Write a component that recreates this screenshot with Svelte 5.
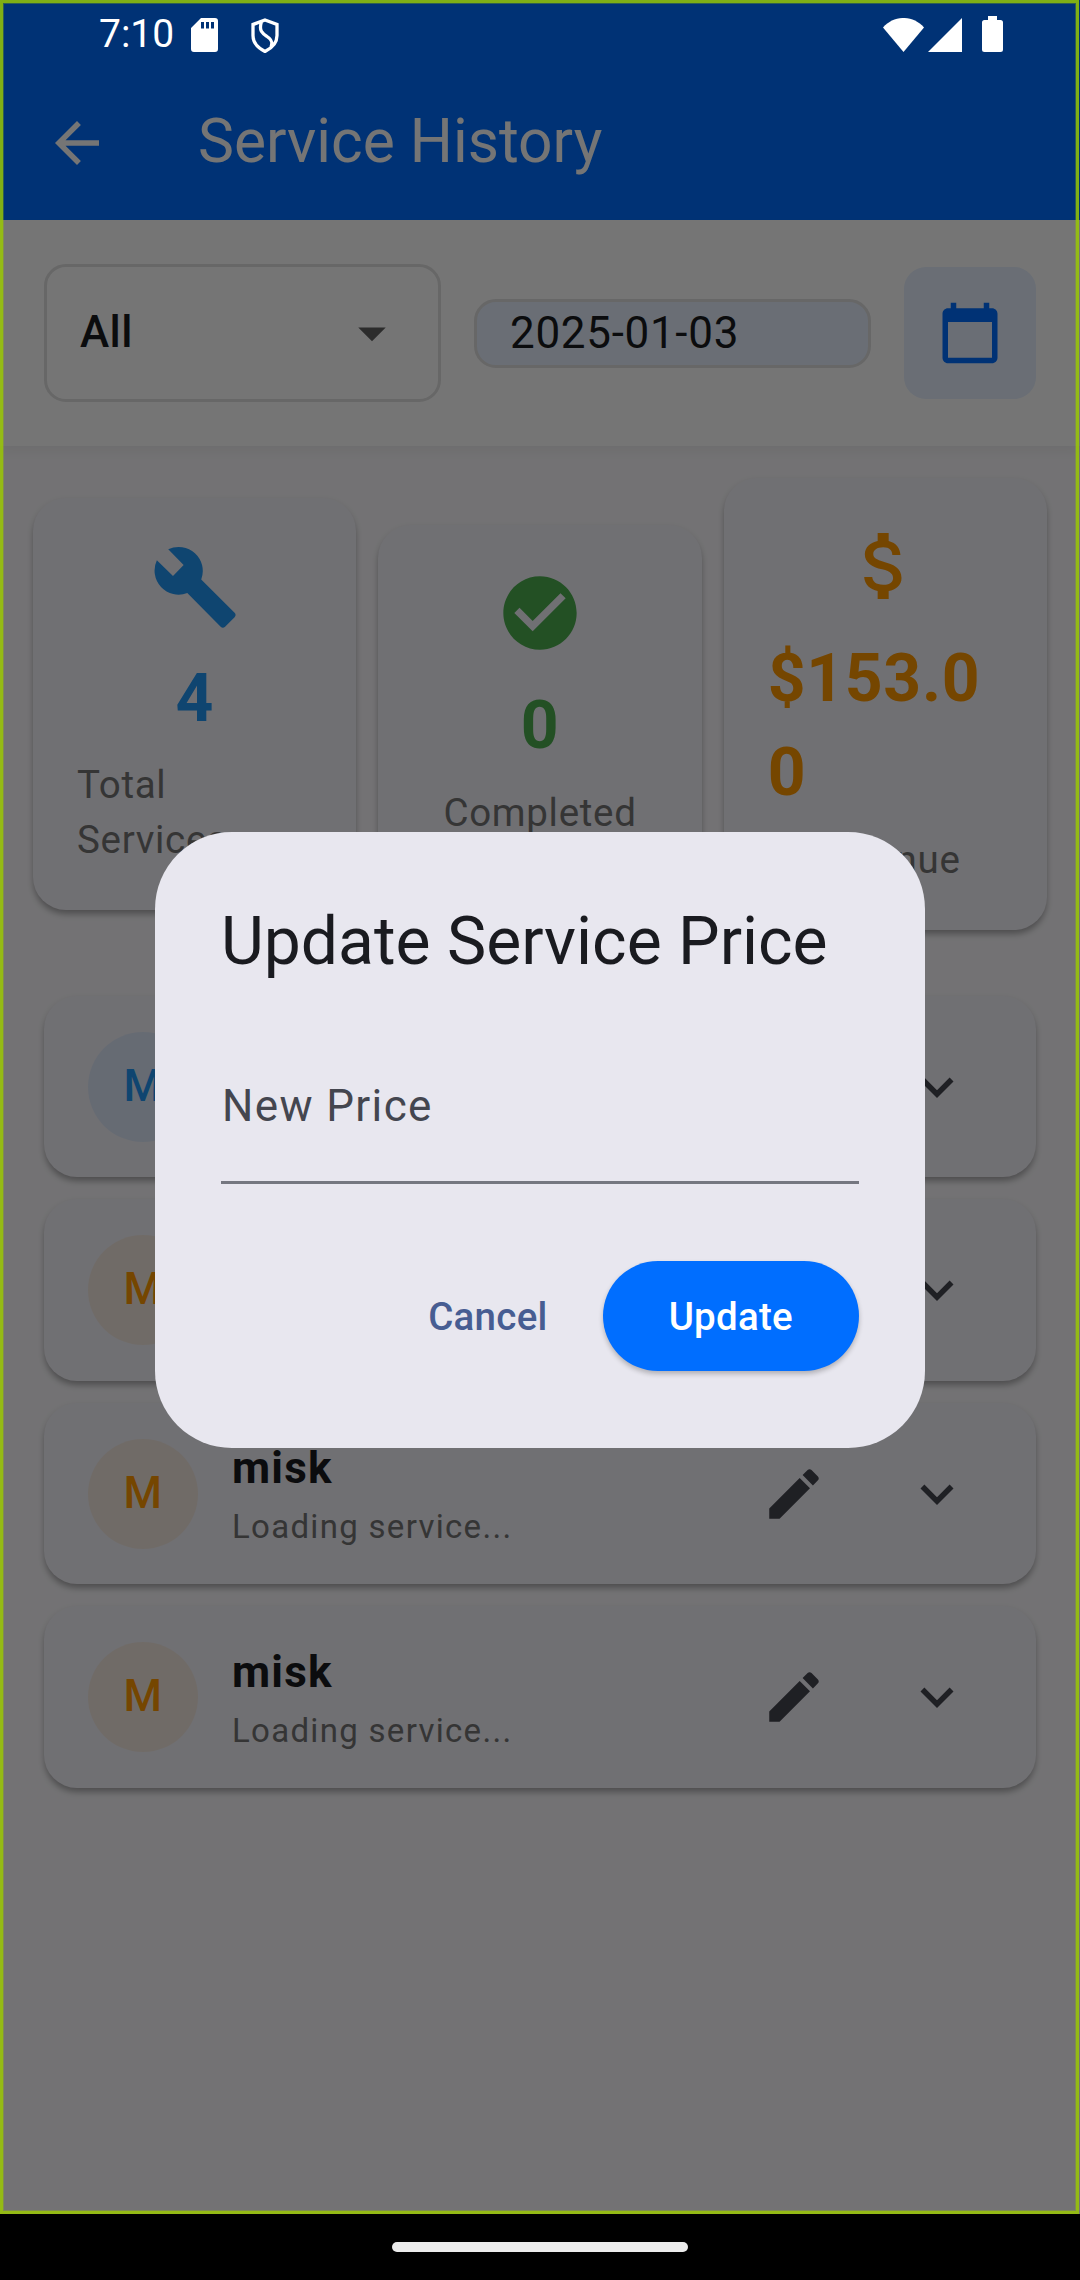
<script>
  const stats = [
    { kind: 'total', value: '4', label: 'Total Services' },
    { kind: 'done', value: '0', label: 'Completed' },
    { kind: 'money', value: '$153.00', label: 'Revenue' }
  ];
  const services = [
    { name: 'misk', tone: 'blue' },
    { name: 'misk', tone: 'orange' },
    { name: 'misk', tone: 'orange' },
    { name: 'misk', tone: 'orange' }
  ];
</script>

<div class="device">
  <div class="app">
    <header class="appbar">
      <svg class="icon" viewBox="0 0 24 24"><path d="M20 11H7.83l5.59-5.59L12 4l-8 8 8 8 1.41-1.41L7.83 13H20v-2z" /></svg>
      <h1>Service History</h1>
    </header>

    <section class="filters">
      <div class="select">
        <span>All</span>
        <svg class="icon" viewBox="0 0 24 24"><path d="M7 10l5 5 5-5z" /></svg>
      </div>
      <div class="date">2025-01-03</div>
      <div class="calendar">
        <svg class="icon" viewBox="0 0 24 24"><path d="M20 3h-1V1h-2v2H7V1H5v2H4c-1.1 0-2 .9-2 2v16c0 1.1.9 2 2 2h16c1.1 0 2-.9 2-2V5c0-1.1-.9-2-2-2zm0 18H4V8h16v13z" /></svg>
      </div>
    </section>

    <section class="stats">
      {#each stats as stat}
        <article class="stat {stat.kind}">
          <svg viewBox="0 0 24 24">
            {#if stat.kind === 'total'}
              <path d="M4.7 2A6.55 6.55 0 0 1 13.7 10.2L22.8 19.3a.9.9 0 0 1 0 1.2L20.2 23.1a.9.9 0 0 1-1.2 0L9.9 13.9A6.55 6.55 0 0 1 1.6 5L6 9.300 8.900 6.300z" />
            {:else if stat.kind === 'done'}
              <path d="M12 2C6.48 2 2 6.48 2 12s4.48 10 10 10 10-4.48 10-10S17.52 2 12 2zm-2 15l-5-5 1.41-1.41L10 14.17l7.59-7.59L19 8l-9 9z" />
            {:else}
              <path d="M11.8 10.9c-2.27-.59-3-1.2-3-2.15 0-1.09 1.01-1.85 2.7-1.85 1.78 0 2.44.85 2.5 2.1h2.21c-.07-1.72-1.12-3.3-3.21-3.81V3h-3v2.16c-1.94.42-3.5 1.68-3.5 3.61 0 2.31 1.91 3.46 4.7 4.13 2.5.6 3 1.48 3 2.41 0 .69-.49 1.79-2.7 1.79-2.06 0-2.87-.92-2.98-2.1h-2.2c.12 2.19 1.76 3.42 3.68 3.83V21h3v-2.15c1.95-.37 3.5-1.5 3.5-3.55 0-2.84-2.43-3.81-4.7-4.4z" />
            {/if}
          </svg>
          <strong>{stat.value}</strong>
          <span>{stat.label}</span>
        </article>
      {/each}
    </section>

    <section class="list">
      {#each services as service}
        <article class="row">
          <div class="avatar {service.tone}">M</div>
          <div class="info">
            <b>{service.name}</b>
            <small>Loading service...</small>
          </div>
          <svg class="icon edit" viewBox="0 0 24 24"><path d="M3 17.25V21h3.75L17.81 9.94l-3.75-3.75L3 17.25zM20.71 7.04c.39-.39.39-1.02 0-1.41l-2.34-2.34c-.39-.39-1.02-.39-1.41 0l-1.83 1.83 3.75 3.75 1.83-1.83z" /></svg>
          <svg class="icon" viewBox="0 0 24 24"><path d="M16.59 8.59L12 13.17 7.41 8.59 6 10l6 6 6-6z" /></svg>
        </article>
      {/each}
    </section>
  </div>

  <footer class="navbar"><i></i></footer>

  <div class="scrim">
    <div class="dialog">
      <h2>Update Service Price</h2>
      <div class="field">New Price</div>
      <div class="actions">
        <span class="cancel">Cancel</span>
        <span class="update">Update</span>
      </div>
    </div>
  </div>

  <div class="statusbar">
    <span>7:10</span>
    <svg class="sd" viewBox="0 0 27 34"><path fill-rule="evenodd" d="M10 0H24a3 3 0 0 1 3 3V31a3 3 0 0 1-3 3H3a3 3 0 0 1-3-3V10zM10 4v6.5h3V4zM15 4v6.5h3V4zM20 4v6.5h3V4z" /></svg>
    <svg class="shield" viewBox="0 0 30 35"><path d="M15 2L27 6.500V17.5C27 24.5 22 30 15 33.500 8 30 3 24.5 3 17.5V6.500zM11.500 3.500C8.500 13 12.500 15.500 17 18.500C22.500 22 22.500 25 21 29" /></svg>
    <div class="signals">
      <svg class="wifi" viewBox="0 0 41 34"><path d="M20.500 34L0 9.500C11-3.200 30-3.200 41 9.500z" /></svg>
      <svg class="cell" viewBox="0 0 34 34"><path d="M34 0V34H0z" /></svg>
      <svg class="battery" viewBox="0 0 21 36"><path d="M6 0h9v4h3.500a2.500 2.500 0 0 1 2.500 2.500v27a2.500 2.500 0 0 1-2.500 2.500h-16a2.500 2.500 0 0 1-2.500-2.500v-27a2.500 2.500 0 0 1 2.500-2.500H6z" /></svg>
    </div>
  </div>
  <div class="frame"></div>
</div>

<style>
  :global(body) {
    margin: 0;
    background: #000;
  }
  .device {
    position: relative;
    display: flex;
    flex-direction: column;
    width: 1080px;
    height: 2280px;
    overflow: hidden;
    font-family: Roboto, "Liberation Sans", sans-serif;
  }
  .device * {
    box-sizing: border-box;
  }
  svg {
    display: block;
    flex: none;
    fill: currentColor;
  }
  .icon {
    width: 66px;
    height: 66px;
  }
  .app {
    height: 2214px;
    background: #faf9fc;
  }
  .appbar {
    display: flex;
    align-items: center;
    gap: 88px;
    height: 220px;
    padding: 66px 44px 0;
    background: #006eff;
    color: #fff;
  }
  h1 {
    margin: 0;
    padding-bottom: 2px;
    font-size: 60.5px;
    line-height: 76px;
    font-weight: 400;
  }
  .filters {
    position: relative;
    display: flex;
    align-items: center;
    gap: 33px;
    height: 226px;
    padding: 0 44px;
    background: #fff;
    box-shadow: 0 5px 11px rgba(0, 0, 0, 0.05);
  }
  .select,
  .date {
    flex: 1;
    border: 3px solid #e0e0e0;
    border-radius: 22px;
    padding: 0 33px;
    font-size: 44px;
    color: #1a1b20;
  }
  .select {
    display: flex;
    align-items: center;
    justify-content: space-between;
    height: 138px;
    font-weight: 500;
    letter-spacing: 0.41px;
  }
  .select span {
    padding-bottom: 2px;
  }
  .select .icon {
    color: #616161;
  }
  .date {
    height: 69px;
    line-height: 63px;
    letter-spacing: 0.69px;
    background: #e6f0ff;
  }
  .calendar {
    display: flex;
    align-items: center;
    justify-content: center;
    width: 132px;
    height: 132px;
    border-radius: 22px;
    background: #e6f0ff;
    color: #006eff;
  }
  .stats {
    display: flex;
    align-items: center;
    gap: 22px;
    padding: 32px 33px 0;
  }
  .stat {
    flex: 1;
    min-width: 0;
    display: flex;
    flex-direction: column;
    align-items: center;
    padding: 44px 44px 43px;
    border-radius: 33px;
    background: #f4f3fa;
    box-shadow: 0 5px 6px -1px rgba(0, 0, 0, 0.25), 0 3px 7px rgba(0, 0, 0, 0.1);
  }
  .stat svg {
    width: 88px;
    height: 88px;
    margin-bottom: 22px;
  }
  .stat strong {
    margin-bottom: 11px;
    font-size: 66px;
    line-height: 94.4px;
    font-weight: 700;
    letter-spacing: 0.69px;
    word-break: break-all;
  }
  .stat span {
    font-size: 38.5px;
    line-height: 55px;
    letter-spacing: 0.69px;
    color: #757575;
  }
  .total {
    color: #2196f3;
  }
  .done {
    color: #4caf50;
  }
  .money {
    color: #ff9800;
  }
  .list {
    display: flex;
    flex-direction: column;
    gap: 22px;
    padding: 66px 44px 0;
  }
  .row {
    display: flex;
    align-items: center;
    height: 181.5px;
    padding: 0 66px 0 44px;
    border-radius: 33px;
    background: #f4f3fa;
    color: #44464f;
    box-shadow: 0 5px 6px -1px rgba(0, 0, 0, 0.25), 0 3px 7px rgba(0, 0, 0, 0.1);
  }
  .avatar {
    width: 110px;
    height: 110px;
    border-radius: 50%;
    text-align: center;
    font-size: 44px;
    line-height: 109px;
    font-weight: 500;
    letter-spacing: 0.41px;
  }
  .blue {
    background: #dfeafa;
    color: #2196f3;
  }
  .orange {
    background: #f5eae1;
    color: #ff9800;
  }
  .info {
    flex: 1;
    display: flex;
    flex-direction: column;
    margin-left: 34px;
  }
  .info b {
    margin-bottom: 4px;
    font-size: 44px;
    line-height: 62px;
    font-weight: 700;
    letter-spacing: 1.2px;
    color: #1a1b20;
  }
  .info small {
    font-size: 33px;
    line-height: 47px;
    letter-spacing: 1.3px;
    color: #757575;
  }
  .edit {
    margin-right: 77px;
  }
  .navbar {
    display: flex;
    align-items: center;
    justify-content: center;
    height: 66px;
    background: #000;
  }
  .navbar i {
    width: 296px;
    height: 10px;
    border-radius: 5px;
    background: #ececec;
  }
  .scrim {
    position: absolute;
    inset: 0 0 66px;
    display: flex;
    align-items: center;
    justify-content: center;
    padding-top: 66px;
    background: rgba(0, 0, 0, 0.541);
  }
  .dialog {
    width: 770px;
    height: 616px;
    padding: 66px;
    border-radius: 77px;
    background: #e8e7ef;
  }
  h2 {
    margin: 0 0 44px;
    font-size: 66px;
    line-height: 88px;
    font-weight: 400;
    color: #1a1b20;
  }
  .field {
    height: 154px;
    border-bottom: 3px solid #757780;
    padding: 43px 0 0 1px;
    font-size: 44px;
    line-height: 66px;
    letter-spacing: 1.375px;
    color: #44464f;
  }
  .actions {
    display: flex;
    align-items: center;
    justify-content: flex-end;
    height: 132px;
    margin-top: 66px;
    font-size: 38.5px;
    line-height: 108px;
    font-weight: 500;
    letter-spacing: 0.275px;
  }
  .cancel {
    padding: 2px 33px 0;
    margin-right: 22px;
    color: #475d92;
  }
  .update {
    padding: 2px 66px 0;
    border-radius: 55px;
    background: #006eff;
    color: #fff;
    box-shadow: 0 3px 5px rgba(0, 0, 0, 0.24);
  }
  .statusbar {
    position: absolute;
    inset: 0 0 auto;
    display: flex;
    align-items: flex-start;
    height: 66px;
    padding: 16px 77px 0 99px;
    color: #fff;
    font-size: 39px;
    line-height: 36px;
  }
  .statusbar span {
    width: 92px;
  }
  .sd {
    width: 27px;
    height: 34px;
    margin-top: 2px;
  }
  .shield {
    width: 30px;
    height: 35px;
    margin: 2px 0 0 32px;
    fill: none;
    stroke: currentColor;
    stroke-width: 3.3;
  }
  .signals {
    display: flex;
    align-items: flex-end;
    margin-left: auto;
  }
  .wifi {
    width: 41px;
    height: 34px;
    margin-right: 4px;
  }
  .cell {
    width: 34px;
    height: 34px;
    margin-right: 20px;
  }
  .battery {
    width: 21px;
    height: 36px;
  }
  .frame {
    position: absolute;
    inset: 0 1px 66px 0;
    border: 3px solid rgba(155, 202, 0, 0.82);
    box-shadow: inset 0 0 0 1px rgba(155, 202, 0, 0.3);
  }
</style>
